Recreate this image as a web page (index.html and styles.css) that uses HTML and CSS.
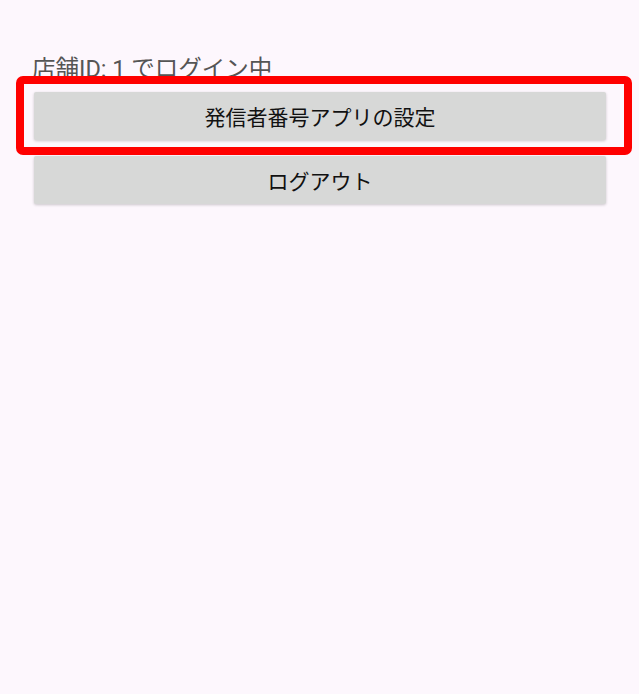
FILE: index.html
```html
<!DOCTYPE html>
<html>

	<head>
		<meta charset="UTF-8">
		<title>ログイン中</title>
		<link rel="stylesheet" href="styles.css">
	</head>

	<body>
		<div class="screen">
			<p class="status">店舗ID: 1 でログイン中</p>
			<div class="actions">
				<button class="btn">発信者番号アプリの設定</button>
				<button class="btn">ログアウト</button>
			</div>
			<div class="mark"></div>
		</div>
	</body>

</html>
```

FILE: styles.css
```css
* {
	padding: 0;
	margin: 0;
	box-sizing: border-box;
}

body {
	background: #fdf7fd;
	font-family: Roboto, "Noto Sans CJK JP", sans-serif;
}

.screen {
	position: relative;
	width: 639px;
	height: 694px;
	padding: 54px 33px 0 34px;
}

.status {
	font-size: 23.5px;
	line-height: 30px;
	height: 30px;
	color: #555;
	margin-left: -2px;
}

.actions {
	display: flex;
	flex-direction: column;
	gap: 16px;
	margin-top: 8px;
}

.btn {
	width: 572px;
	height: 48px;
	border: none;
	border-radius: 2px;
	background: #d7d8d7;
	color: #111;
	font-family: Roboto, "Noto Sans CJK JP", sans-serif;
	font-size: 21px;
	box-shadow: 0 1px 3px rgba(0, 0, 0, 0.2);
}

/* 赤い枠（注釈） */
.mark {
	position: absolute;
	left: 16px;
	top: 76px;
	width: 616px;
	height: 79px;
	border: 8px solid #ff0000;
	border-radius: 7px;
}
```
